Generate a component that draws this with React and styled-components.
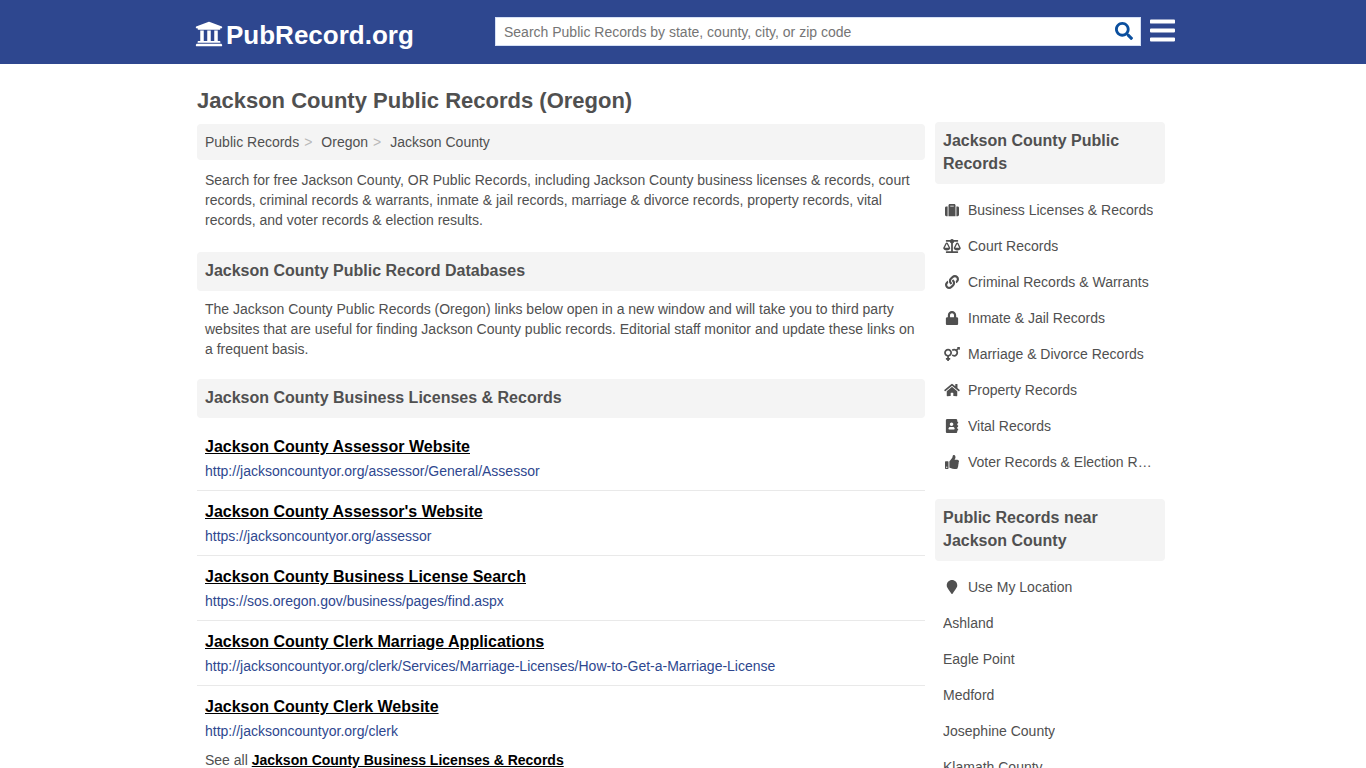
import React, { useState } from "react";
import styled, { createGlobalStyle } from "styled-components";
import {
  FaAddressBook,
  FaBalanceScale,
  FaBars,
  FaHome,
  FaLink,
  FaLock,
  FaMapMarker,
  FaSearch,
  FaSuitcase,
  FaThumbsUp,
  FaUniversity,
  FaVenusMars,
} from "react-icons/fa";

const GlobalStyle = createGlobalStyle`
  * {
    box-sizing: border-box;
  }

  body {
    margin: 0;
    background: #ffffff;
    color: #505050;
    font-family: "Liberation Sans", Arial, sans-serif;
    font-size: 14px;
    line-height: 20px;
  }

  a {
    color: inherit;
    text-decoration: none;
  }
`;

const tablet = (styles) => `
  @media only screen and (max-width: 900px) {
    ${styles}
  }
`;

const Header = styled.header`
  background: #2e478f;
  padding-left: 4px;
`;

const HeaderContent = styled.div`
  max-width: 980px;
  min-height: 64px;
  margin: 0 auto;
  display: flex;
  align-items: center;
  justify-content: space-between;
  gap: 9px;
`;

const Logo = styled.a`
  flex: 1;
  display: flex;
  align-items: center;
  gap: 3px;
  padding-top: 6px;
  color: #ffffff;
  font-size: 26px;
  font-weight: 700;
  line-height: 30px;

  svg {
    width: 28px;
    height: 28px;
    margin-bottom: 3px;
  }
`;

const SearchForm = styled.form`
  flex: 0 1 646px;
  height: 29px;
  margin-bottom: 2px;
  display: flex;
  background: #ffffff;
  border: 1px solid #d5e0f5;
`;

const SearchInput = styled.input`
  flex: 1;
  min-width: 0;
  padding: 1px 8px 0;
  border: 0;
  outline: 0;
  background: transparent;
  color: #505050;
  font: inherit;

  &::placeholder {
    color: #757575;
    opacity: 1;
  }
`;

const SearchButton = styled.button`
  display: flex;
  align-items: center;
  padding: 0 7px;
  border: 0;
  background: transparent;
  color: #0b4f9e;
  font-size: 18px;
  cursor: pointer;
`;

const MenuButton = styled.button`
  display: flex;
  padding: 0;
  margin-bottom: 3px;
  border: 0;
  background: transparent;
  color: #ffffff;
  font-size: 29px;
  cursor: pointer;

  svg {
    width: 25px;
  }
`;

const Page = styled.div`
  padding-right: 4px;
`;

const Container = styled.div`
  max-width: 968px;
  margin: 0 auto;
  display: flex;
  align-items: flex-start;
  gap: 10px;

  ${tablet(`
    flex-direction: column;
    align-items: stretch;
    padding: 0 10px;
  `)}
`;

const Main = styled.main`
  flex: 1;
  min-width: 0;
`;

const Sidebar = styled.aside`
  flex: 0 0 230px;
  min-width: 0;
  padding-top: 58px;
  display: flex;
  flex-direction: column;
  gap: 19px;

  ${tablet(`
    flex-basis: auto;
    padding-top: 0;
  `)}
`;

const Title = styled.h1`
  margin: 22px 0 8px;
  font-size: 22px;
  line-height: 30px;
`;

const Breadcrumbs = styled.ol`
  display: flex;
  flex-wrap: wrap;
  margin: 0;
  padding: 8px;
  list-style: none;
  background: #f4f4f4;
  border-radius: 4px;
`;

const Crumb = styled.li`
  &:not(:last-child)::after {
    content: ">";
    margin: 0 9px 0 5px;
    color: #b9b9b9;
  }
`;

const Text = styled.p`
  margin: 0;
  padding: ${({ $intro }) => ($intro ? "10px 8px 22px" : "8px 8px 20px")};
`;

const SectionTitle = styled.h2`
  margin: 0;
  padding: 7px 8px 9px;
  background: #f4f4f4;
  border-radius: 4px;
  font-size: 16px;
  line-height: 23px;
`;

const LinkList = styled.ul`
  margin: 0;
  padding: 8px 0 0;
  list-style: none;
`;

const LinkItem = styled.li`
  padding: 9px 8px;

  &:not(:last-child) {
    border-bottom: 1px solid #e9e9e9;
  }
`;

const LinkTitle = styled.a`
  display: table;
  margin-bottom: 3px;
  color: #000000;
  font-size: 16px;
  font-weight: 700;
  line-height: 23px;
  text-decoration: underline;
`;

const LinkUrl = styled.span`
  display: block;
  color: #2e478f;
`;

const SeeAll = styled.p`
  margin: 0;
  padding: 0 8px;

  a {
    color: #000000;
    font-weight: 700;
    text-decoration: underline;
  }
`;

const SideList = styled.ul`
  margin: 8px 0 0;
  padding: 0;
  list-style: none;
`;

const SideLink = styled.a`
  display: flex;
  align-items: center;
  padding: 8px;

  svg {
    flex: none;
    width: 18px;
    margin-right: 7px;
  }

  span {
    overflow: hidden;
    text-overflow: ellipsis;
    white-space: nowrap;
  }
`;

const crumbs = ["Public Records", "Oregon", "Jackson County"];

const businessLinks = [
  { title: "Jackson County Assessor Website", url: "http://jacksoncountyor.org/assessor/General/Assessor" },
  { title: "Jackson County Assessor's Website", url: "https://jacksoncountyor.org/assessor" },
  { title: "Jackson County Business License Search", url: "https://sos.oregon.gov/business/pages/find.aspx" },
  {
    title: "Jackson County Clerk Marriage Applications",
    url: "http://jacksoncountyor.org/clerk/Services/Marriage-Licenses/How-to-Get-a-Marriage-License",
  },
  { title: "Jackson County Clerk Website", url: "http://jacksoncountyor.org/clerk" },
];

const categories = [
  { label: "Business Licenses & Records", icon: FaSuitcase },
  { label: "Court Records", icon: FaBalanceScale },
  { label: "Criminal Records & Warrants", icon: FaLink },
  { label: "Inmate & Jail Records", icon: FaLock },
  { label: "Marriage & Divorce Records", icon: FaVenusMars },
  { label: "Property Records", icon: FaHome },
  { label: "Vital Records", icon: FaAddressBook },
  { label: "Voter Records & Election Results", icon: FaThumbsUp },
];

const nearby = [
  { label: "Use My Location", icon: FaMapMarker },
  { label: "Ashland" },
  { label: "Eagle Point" },
  { label: "Medford" },
  { label: "Josephine County" },
  { label: "Klamath County" },
];

const SideSection = ({ title, items }) => (
  <section>
    <SectionTitle>{title}</SectionTitle>
    <SideList>
      {items.map(({ label, icon: Icon }) => (
        <li key={label}>
          <SideLink href="#">
            {Icon && <Icon />}
            <span>{label}</span>
          </SideLink>
        </li>
      ))}
    </SideList>
  </section>
);

const App = () => {
  const [query, setQuery] = useState("");

  return (
    <>
      <GlobalStyle />
      <Header>
        <HeaderContent>
          <Logo href="#">
            <FaUniversity />
            <span>PubRecord.org</span>
          </Logo>
          <SearchForm role="search" onSubmit={(e) => e.preventDefault()}>
            <SearchInput
              type="text"
              aria-label="Search Public Records"
              placeholder="Search Public Records by state, county, city, or zip code"
              value={query}
              onChange={(e) => setQuery(e.target.value)}
            />
            <SearchButton type="submit" aria-label="Search">
              <FaSearch />
            </SearchButton>
          </SearchForm>
          <MenuButton type="button" aria-label="Menu">
            <FaBars />
          </MenuButton>
        </HeaderContent>
      </Header>

      <Page>
        <Container>
          <Main>
            <Title>Jackson County Public Records (Oregon)</Title>
            <nav aria-label="Breadcrumb">
              <Breadcrumbs>
                {crumbs.map((crumb) => (
                  <Crumb key={crumb}>
                    <a href="#">{crumb}</a>
                  </Crumb>
                ))}
              </Breadcrumbs>
            </nav>
            <Text $intro>
              Search for free Jackson County, OR Public Records, including Jackson County business licenses &
              records, court records, criminal records & warrants, inmate & jail records, marriage & divorce
              records, property records, vital records, and voter records & election results.
            </Text>

            <SectionTitle>Jackson County Public Record Databases</SectionTitle>
            <Text>
              The Jackson County Public Records (Oregon) links below open in a new window and will take you to
              third party websites that are useful for finding Jackson County public records. Editorial staff
              monitor and update these links on a frequent basis.
            </Text>

            <SectionTitle>Jackson County Business Licenses & Records</SectionTitle>
            <LinkList>
              {businessLinks.map((link) => (
                <LinkItem key={link.title}>
                  <LinkTitle href={link.url}>{link.title}</LinkTitle>
                  <LinkUrl>{link.url}</LinkUrl>
                </LinkItem>
              ))}
            </LinkList>
            <SeeAll>
              See all <a href="#">Jackson County Business Licenses & Records</a>
            </SeeAll>
          </Main>

          <Sidebar>
            <SideSection title="Jackson County Public Records" items={categories} />
            <SideSection title="Public Records near Jackson County" items={nearby} />
          </Sidebar>
        </Container>
      </Page>
    </>
  );
};

export default App;
